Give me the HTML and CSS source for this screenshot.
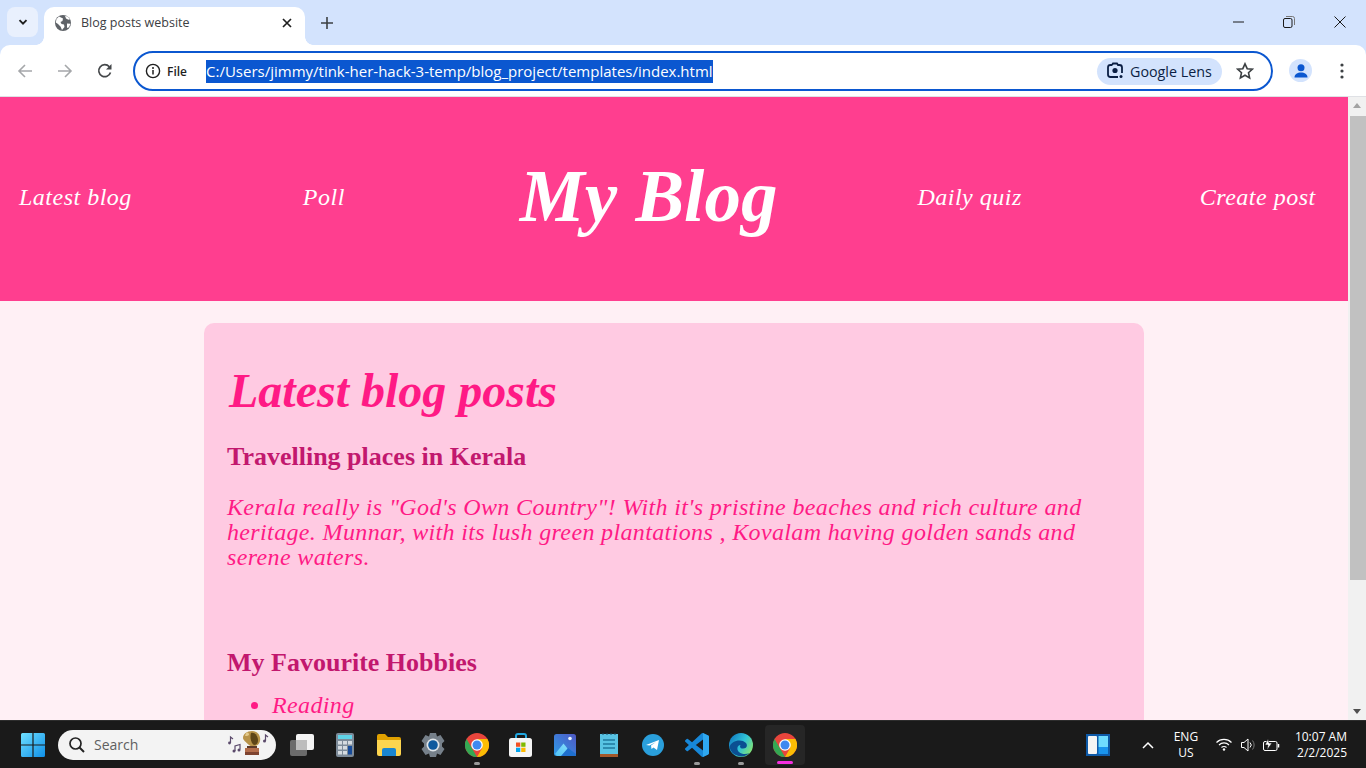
FILE: index.html
```html
<!DOCTYPE html>
<html lang="en">
<head>
<meta charset="utf-8">
<title>Blog posts website</title>
<link rel="stylesheet" href="styles.css">
</head>
<body>
<div class="window">
  <div class="tabstrip">
    <button class="tab-search"><svg width="12" height="12" viewBox="0 0 12 12"><path d="M2.5 4.2 6 7.7l3.5-3.5" fill="none" stroke="#1f1f1f" stroke-width="1.9"/></svg></button>
    <div class="tab">
      <svg class="tab-fav" width="16" height="16" viewBox="0 0 16 16"><circle cx="8" cy="8" r="8" fill="#5f6368"/><path d="M4 1.5 8 3.5 7.5 6 5.5 7 6.5 9 9 9.5 9.5 12 7 15 5.500 11.500 3 9 .8 7.500 1.500 4ZM10 .8l1 2.700 2.500 1.200 1.500-.5-2-2.500ZM12 8.500l3.500.2-1.500 3.500-2 .8Z" fill="#fff"/></svg>
      <span class="tab-title">Blog posts website</span>
      <svg class="tab-close" width="10" height="10" viewBox="0 0 10 10"><path d="M1 1l8 8M9 1 1 9" stroke="#1f1f1f" stroke-width="1.7"/></svg>
    </div>
    <svg class="new-tab" width="12" height="12" viewBox="0 0 12 12"><path d="M6 0v12M0 6h12" stroke="#3c4043" stroke-width="1.6"/></svg>
    <div class="win-controls">
      <svg width="11" height="11" viewBox="0 0 11 11"><path d="M0 5h11" stroke="#1a1a1a"/></svg>
      <svg width="12" height="12" viewBox="0 0 12 12"><rect x=".5" y="2.5" width="8.5" height="9" rx="1.5" fill="none" stroke="#1a1a1a"/><path d="M3 .5h6.500a2 2 0 0 1 2 2V9" fill="none" stroke="#777"/></svg>
      <svg width="12" height="12" viewBox="0 0 12 12"><path d="M.5.5l11 11M11.500.5l-11 11" stroke="#1a1a1a"/></svg>
    </div>
  </div>
  <div class="toolbar">
    <svg class="nav-ico" width="16" height="16" viewBox="0 0 16 16"><path d="M15 8H2M8 2 2 8l6 6" fill="none" stroke="#a5a7aa" stroke-width="1.6"/></svg>
    <svg class="nav-ico" width="16" height="16" viewBox="0 0 16 16"><path d="M1 8h13M8 2l6 6-6 6" fill="none" stroke="#a5a7aa" stroke-width="1.6"/></svg>
    <svg class="nav-ico" width="16" height="16" viewBox="0 0 16 16"><path d="M13.500 9.500A6 6 0 1 1 12.300 3.700" fill="none" stroke="#44474a" stroke-width="1.700"/><path d="M14.500 1v5.500H9z" fill="#44474a"/></svg>
    <div class="omnibox">
      <svg class="info" width="16" height="16" viewBox="0 0 16 16"><circle cx="8" cy="8" r="6.600" fill="none" stroke="#1f1f1f" stroke-width="1.400"/><path d="M8 7v4.500" stroke="#1f1f1f" stroke-width="1.500"/><circle cx="8" cy="4.900" r="1" fill="#1f1f1f"/></svg>
      <span class="file">File</span>
      <span class="url">C:/Users/jimmy/tink-her-hack-3-temp/blog_project/templates/index.html</span>
      <span class="lens">
        <svg width="18" height="18" viewBox="0 0 18 18"><path d="M6 3H4.500A2.500 2.500 0 0 0 2 5.500v7A2.500 2.500 0 0 0 4.500 15H12M6 3l1-1.500h4L12 3h1.500A2.500 2.500 0 0 1 16 5.500V11" fill="none" stroke="#0b1f44" stroke-width="1.800"/><circle cx="9" cy="8.500" r="2.600" fill="#0b1f44"/><circle cx="15" cy="14.500" r="1.500" fill="#0b1f44"/></svg>
        Google Lens
      </span>
      <svg class="star" width="18" height="18" viewBox="0 0 18 18"><path d="M9 1.800l2.200 4.900 5.200.5-3.900 3.500 1.100 5.200L9 13.200l-4.600 2.700 1.100-5.200-3.900-3.500 5.200-.5z" fill="none" stroke="#3c4043" stroke-width="1.600"/></svg>
    </div>
    <span class="avatar"><svg width="16" height="16" viewBox="0 0 16 16"><circle cx="8" cy="4.800" r="3.500" fill="#0b57d0"/><path d="M1.500 14.500c0-3.500 3-5 6.500-5s6.500 1.500 6.500 5z" fill="#0b57d0"/></svg></span>
    <svg class="menu" width="4" height="16" viewBox="0 0 4 16"><circle cx="2" cy="2" r="1.600" fill="#3c4043"/><circle cx="2" cy="8" r="1.600" fill="#3c4043"/><circle cx="2" cy="14" r="1.600" fill="#3c4043"/></svg>
  </div>
  <div class="viewport">
    <div class="page">
      <header class="hero">
        <nav class="nav-group">
          <a class="nav-link">Latest blog</a>
          <a class="nav-link">Poll</a>
        </nav>
        <h1 class="brand">My Blog</h1>
        <nav class="nav-group nav-group-right">
          <a class="nav-link">Daily quiz</a>
          <a class="nav-link">Create post</a>
        </nav>
      </header>
      <main class="card">
        <h2 class="card-title">Latest blog posts</h2>
        <article class="post">
          <h3 class="post-title">Travelling places in Kerala</h3>
          <p class="post-text">Kerala really is "God's Own Country"! With it's pristine beaches and rich culture and heritage. Munnar, with its lush green plantations , Kovalam having golden sands and serene waters.</p>
        </article>
        <article class="post">
          <h3 class="post-title">My Favourite Hobbies</h3>
          <ul class="post-list"><li>Reading</li></ul>
        </article>
      </main>
    </div>
    <div class="scrollbar">
      <span class="arrow-up"></span>
      <div class="track"><div class="thumb"></div></div>
      <span class="arrow-down"></span>
    </div>
  </div>
  <footer class="taskbar">
    <span class="slot"><svg width="24" height="24" viewBox="0 0 24 24"><defs><linearGradient id="w" x1="0" y1="0" x2="1" y2="1"><stop offset="0" stop-color="#6fe0ff"/><stop offset="1" stop-color="#0f8fe8"/></linearGradient></defs><path d="M0 1.500A1.500 1.500 0 0 1 1.500 0H11.400V11.400H0ZM12.600 0h9.900A1.500 1.500 0 0 1 24 1.500v9.900H12.600ZM0 12.600H11.400V24H1.500A1.500 1.500 0 0 1 0 22.500ZM12.600 12.600H24v9.900A1.500 1.500 0 0 1 22.500 24h-9.900Z" fill="url(#w)"/></svg></span>
    <div class="search">
      <svg width="18" height="18" viewBox="0 0 18 18"><circle cx="7.500" cy="7.500" r="5.500" fill="none" stroke="#222" stroke-width="1.700"/><path d="M11.500 11.500 16 16" stroke="#222" stroke-width="1.900"/></svg>
      <span class="search-text">Search</span>
      <svg class="gramophone" width="46" height="28" viewBox="0 0 46 28"><g fill="none" stroke="#5b4a6b" stroke-width="1.200"><path d="M3.500 12V6l2.500 2"/><path d="M8 20v-5l5-1.500v5"/><path d="M38.500 10V4l2.500 2"/></g><circle cx="2.500" cy="12" r="1.400" fill="#5b4a6b"/><circle cx="7" cy="20" r="1.500" fill="#5b4a6b"/><circle cx="12" cy="19" r="1.500" fill="#5b4a6b"/><circle cx="37.500" cy="10" r="1.500" fill="#5b4a6b"/><path d="M25 0C31 0 34 5 33 10c-.5 3-3 5-6 5l-2 1-3-2c-3-3-6-5-6-7C16 3 20 0 25 0Z" fill="#b8934a"/><path d="M24 2c4-1 7 3 7 7s-2 5-4 5c-2-1-3-4-3.500-7 0-2 0-4 .5-5Z" fill="#5e4518"/><path d="M19 2c2-1 3 0 3 2-1 1-3 1-4 1Z" fill="#e3c98a"/><path d="M20 15h10v3H20z" fill="#5c3a2a"/><path d="M18 17h14v4H18z" fill="#b36d4c"/><path d="M18 21h14v3H18z" fill="#7d4330"/></svg>
    </div>
    <span class="slot first"><svg width="24" height="22" viewBox="0 0 24 22"><rect y="6" width="17" height="16" rx="2" fill="#6b6b6b"/><rect x="6" y="0" width="18" height="16" rx="2" fill="#f4f4f4"/><rect x="6" y="6" width="11" height="10" fill="#bdbdbd"/></svg></span>
    <span class="slot"><svg width="18" height="24" viewBox="0 0 18 24"><rect width="18" height="24" rx="2" fill="#7d8b99"/><rect x="2" y="2" width="14" height="4" fill="#5fd3e8"/><g fill="#d5dbe0"><rect x="2" y="8" width="4" height="3.500"/><rect x="7" y="8" width="4" height="3.500"/><rect x="12" y="8" width="4" height="3.500"/><rect x="2" y="13" width="4" height="3.500"/><rect x="7" y="13" width="4" height="3.500"/><rect x="2" y="18" width="4" height="3.500"/><rect x="7" y="18" width="4" height="3.500"/></g><rect x="12" y="13" width="4" height="8.500" fill="#174b99"/></svg></span>
    <span class="slot"><svg width="24" height="22" viewBox="0 0 24 22"><path d="M0 2a2 2 0 0 1 2-2h6l3 3h11a2 2 0 0 1 2 2v3H0Z" fill="#e0a100"/><path d="M0 6h24v14a2 2 0 0 1-2 2H2a2 2 0 0 1-2-2Z" fill="#fdd54f"/><path d="M5 16a2 2 0 0 1 2-2h10a2 2 0 0 1 2 2v6H5Z" fill="#1a86d0"/></svg></span>
    <span class="slot"><svg width="24" height="24" viewBox="0 0 24 24"><path d="M9 0h6l1 3.500 3.500-1.500 4 6L21 10.500v3l2.500 2.500-4 6L16 20.500 15 24H9l-1-3.500L4.500 22l-4-6L3 13.500v-3L.5 8l4-6L8 3.500Z" fill="#76808a"/><circle cx="12" cy="12" r="6.500" fill="#dfe4e8"/><circle cx="12" cy="12" r="4.800" fill="#0f5a9e"/></svg></span>
    <span class="slot dotted"><svg width="24" height="24" viewBox="0 0 24 24"><circle cx="12" cy="12" r="12" fill="#e8453c"/><path d="M1.600 6 6.800 15 12 24A12 12 0 0 1 1.600 6Z" fill="#34a853"/><path d="M12 6H22.400A12 12 0 0 1 12 24L17.200 15Z" fill="#fbbc04"/><circle cx="12" cy="12" r="5.800" fill="#fff"/><circle cx="12" cy="12" r="4.500" fill="#3f89f0"/></svg></span>
    <span class="slot"><svg width="24" height="24" viewBox="0 0 24 24"><path d="M7 6V3a2 2 0 0 1 2-2h6a2 2 0 0 1 2 2v3" fill="none" stroke="#22a7e0" stroke-width="2"/><rect y="5" width="23" height="19" rx="2.500" fill="#f5f5f5"/><rect x="7" y="9.500" width="4.300" height="4.300" fill="#f25022"/><rect x="12.200" y="9.500" width="4.300" height="4.300" fill="#7fba00"/><rect x="7" y="14.700" width="4.300" height="4.300" fill="#00a4ef"/><rect x="12.200" y="14.700" width="4.300" height="4.300" fill="#ffb900"/></svg></span>
    <span class="slot"><svg width="22" height="22" viewBox="0 0 22 22"><defs><linearGradient id="p" x1="0" y1="1" x2="1" y2="0"><stop offset="0" stop-color="#2e9be8"/><stop offset="1" stop-color="#4f58c4"/></linearGradient><linearGradient id="m" x1="0" y1="1" x2="1" y2="0"><stop offset="0" stop-color="#4fc3f7"/><stop offset="1" stop-color="#8fe3fb"/></linearGradient></defs><rect width="22" height="22" rx="2.500" fill="url(#p)"/><circle cx="16" cy="4.500" r="1.800" fill="#e8f4ff"/><path d="M1 20 9.500 9.500 19 21.500 7 22H3Z" fill="url(#m)"/><path d="M7 22 14 14l8 6v2Z" fill="#1e6fce"/></svg></span>
    <span class="slot"><svg width="18" height="24" viewBox="0 0 18 24"><rect y="1" width="18" height="21" fill="#58c3e3"/><rect y="21" width="18" height="3" fill="#a3582a"/><g stroke="#1f7a9e" stroke-width="1.500"><path d="M3 7h12M3 11h12M3 15h12"/></g><g stroke="#184f68" stroke-width="1"><path d="M3 0v2M7 0v2M11 0v2M15 0v2"/></g></svg></span>
    <span class="slot"><svg width="22" height="22" viewBox="0 0 22 22"><circle cx="11" cy="11" r="11" fill="#2a9fdb"/><path d="M4 11l13-5-2 10-3.500-2.500L9.500 15l-.5-3.500L14 8l-6.500 3.500Z" fill="#fff"/></svg></span>
    <span class="slot dotted"><svg width="24" height="24" viewBox="0 0 24 24"><path d="M23.150 2.587 18.210.21a1.494 1.494 0 0 0-1.705.29l-9.460 8.630-4.120-3.128a.999.999 0 0 0-1.276.057L.327 7.261A1 1 0 0 0 .326 8.740L3.899 12 .326 15.260a1 1 0 0 0 .001 1.479L1.650 17.940a.999.999 0 0 0 1.276.057l4.120-3.128 9.460 8.630a1.492 1.492 0 0 0 1.704.29l4.942-2.377A1.500 1.500 0 0 0 24 20.060V3.939a1.500 1.500 0 0 0-.85-1.352zm-5.146 14.861L10.826 12l7.178-5.448v10.896z" fill="#1787d8"/><path d="M18 0 23.150 2.587A1.500 1.500 0 0 1 24 3.939V20.060A1.500 1.500 0 0 1 23.150 21.413L18 24Z" fill="#2fa8f0"/></svg></span>
    <span class="slot dotted"><svg width="24" height="24" viewBox="0 0 24 24"><defs><linearGradient id="e" x1="0" y1="0" x2="1" y2=".6"><stop offset="0" stop-color="#0d6ebd"/><stop offset=".6" stop-color="#2fc3d8"/><stop offset="1" stop-color="#7ee27b"/></linearGradient></defs><circle cx="12" cy="12" r="12" fill="url(#e)"/><path d="M.5 14C2 8 12 5 17 10c2 3 .5 5.500-3 5.500-3 0-3.500-2-2.500-3.500-3 0-4.500 4-1.500 7 3 2.500 7 2.500 10.500 1A12 12 0 0 1 .5 14Z" fill="#0b4f92"/></svg></span>
    <span class="slot active"><svg width="24" height="24" viewBox="0 0 24 24"><circle cx="12" cy="12" r="12" fill="#e8453c"/><path d="M1.600 6 6.800 15 12 24A12 12 0 0 1 1.600 6Z" fill="#34a853"/><path d="M12 6H22.400A12 12 0 0 1 12 24L17.200 15Z" fill="#fbbc04"/><circle cx="12" cy="12" r="5.800" fill="#fff"/><circle cx="12" cy="12" r="4.500" fill="#3f89f0"/></svg></span>
    <div class="tray">
      <svg class="widget" width="24" height="22" viewBox="0 0 24 22"><rect width="24" height="22" fill="#0e5aa8"/><rect x="2" y="2" width="9" height="18" rx="1" fill="#f4f4f4"/><rect x="12.500" y="2" width="9.500" height="11" fill="#6fdcff"/><rect x="12.500" y="13" width="9.500" height="7" fill="#1a95ee"/></svg>
      <svg class="chev" width="12" height="8" viewBox="0 0 12 8"><path d="M1 7l5-5 5 5" fill="none" stroke="#fff" stroke-width="1.500"/></svg>
      <span class="lang">ENG<br>US</span>
      <svg class="wifi" width="16" height="13" viewBox="0 0 16 13"><g fill="none" stroke="#fff" stroke-width="1.100"><path d="M.5 4.500a10.500 10.500 0 0 1 15 0"/><path d="M3 7a7 7 0 0 1 10 0"/><path d="M5.500 9.500a3.500 3.500 0 0 1 5 0"/></g><circle cx="8" cy="11.500" r="1.200" fill="#fff"/></svg>
      <svg class="vol" width="16" height="14" viewBox="0 0 16 14"><path d="M.5 4.500h2.500L7 1v12L3 9.500H.5Z" fill="none" stroke="#fff"/><path d="M9 4.500a3.500 3.500 0 0 1 0 5" fill="none" stroke="#fff"/><path d="M11.500 2.500a7 7 0 0 1 0 9" fill="none" stroke="#777"/></svg>
      <svg class="batt" width="17" height="14" viewBox="0 0 17 14"><rect x=".5" y="3.500" width="13.500" height="9" rx="1.500" fill="none" stroke="#fff"/><path d="M15.500 6v3.500" stroke="#fff" stroke-width="1.500"/><path d="M5 1 2 7h3l-1 5 5-7H6Z" fill="#fff" stroke="#1a1a1a" stroke-width=".6"/></svg>
      <span class="clock">10:07 AM<br>2/2/2025</span>
    </div>
  </footer>
</div>
</body>
</html>
```
FILE: styles.css
```css
* { box-sizing: border-box; }
html, body { margin: 0; height: 100%; overflow: hidden; }
body { font-family: "Open Sans", "Noto Sans", sans-serif; }
.window { display: flex; flex-direction: column; height: 768px; width: 1366px; background: #d3e3fd; }

/* tab strip */
.tabstrip { height: 45px; background: #d3e3fd; display: flex; align-items: flex-end; flex: none; }
.tab-search { width: 31px; height: 30px; margin: 0 6px 8px 7px; border: 0; border-radius: 8px; background: #e9f0fd; display: flex; align-items: center; justify-content: center; padding: 0; }
.tab { width: 261px; height: 38px; background: #fff; border-radius: 10px 10px 0 0; display: flex; align-items: center; padding: 0 13px 7px 11px; font-size: 12.5px; color: #3c4043; position: relative; }
.tab::before, .tab::after { content: ""; position: absolute; bottom: 0; width: 8px; height: 8px; background: radial-gradient(circle at 100% 0, #d3e3fd 7.5px, #fff 8px); }
.tab::before { left: -8px; transform: scaleX(-1); }
.tab::after { right: -8px; }
.tab-fav { flex: none; }
.tab-title { margin-left: 10px; flex: 1; }
.new-tab { margin: 0 0 16px 16px; }
.win-controls { margin-left: auto; display: flex; gap: 39px; padding-right: 20px; margin-bottom: 17px; align-items: center; }

/* toolbar */
.toolbar { height: 52px; display: flex; align-items: center; flex: none; padding-left: 17px; border-bottom: 1px solid #dfe1e5; border-radius: 10px 10px 0 0; background: #fff; }
.nav-ico { margin-right: 24px; flex: none; }
.nav-ico:nth-child(3) { margin-right: 20px; }
.omnibox { width: 1140px; height: 40px; border: 2px solid #0b57d0; border-radius: 20px; display: flex; align-items: center; padding: 0 17px 0 10px; margin-top: 1px; flex: none; }
.info { flex: none; }
.file { font-size: 12px; font-weight: 600; color: #1f1f1f; margin-left: 6px; width: 39px; flex: none; }
.url { background: #0b57d0; color: #fff; font-size: 15px; line-height: 20px; height: 23px; padding-top: 1px; white-space: nowrap; }
.lens { margin-left: auto; height: 27px; width: 125px; border-radius: 14px; background: #d3e3fd; display: flex; align-items: center; gap: 6px; padding-left: 9px; font-size: 14.3px; color: #0b1f44; }
.star { margin-left: 14px; flex: none; }
.avatar { margin-left: 16px; width: 23px; height: 23px; border-radius: 50%; background: #d3e3fd; display: flex; align-items: center; justify-content: center; flex: none; }
.menu { margin-left: 28px; flex: none; }

/* page */
.viewport { flex: 1; min-height: 0; display: flex; overflow: hidden; background: #fff0f5; }
.page { flex: 1; min-width: 0; overflow: hidden; }
.hero { height: 204px; background: #ff3e8f; display: flex; align-items: center; padding: 0 0 4px 19px; color: #fff; }
.nav-group { display: flex; gap: 171px; }
.nav-group-right { gap: 178px; }
.brand { margin: 0 140px 0 175px; }
.nav-link, .brand, .card-title, .post-text, .post-list { font-family: "Liberation Serif", serif; font-style: italic; }
.nav-link { font-size: 24px; letter-spacing: .5px; }
.brand { font-size: 73px; font-weight: 700; white-space: nowrap; }
.card { width: 940px; margin: 22px auto 0; background: #ffcae2; border-radius: 10px; padding: 46px 23px 60px; }
.card-title { margin: 0 0 0 2px; font-size: 48px; font-weight: 700; color: #ff1a85; line-height: 44px; white-space: nowrap; }
.post { margin-bottom: 78px; }
.post-title { margin: 29px 0 0; font-family: "Liberation Serif", serif; font-size: 26px; font-weight: 700; color: #c2186e; line-height: 30px; }
.post-text { margin: 23px 0 0; font-size: 24px; line-height: 25px; letter-spacing: .36px; color: #ff1a85; }
.post-list { margin: 15px 0 0; padding-left: 45px; font-size: 24px; line-height: 25px; letter-spacing: .36px; color: #ff1a85; }

/* scrollbar */
.scrollbar { width: 18px; flex: none; background: #f1f1f1; display: flex; flex-direction: column; align-items: flex-end; }
.arrow-up, .arrow-down { flex: none; height: 17px; width: 17px; position: relative; }
.arrow-up::after, .arrow-down::after { content: ""; position: absolute; left: 4px; border-left: 4.5px solid transparent; border-right: 4.5px solid transparent; }
.arrow-up::after { top: 6px; border-bottom: 5px solid #a3a3a3; }
.arrow-down::after { top: 6px; border-top: 5px solid #505050; }
.track { flex: 1; width: 16px; }
.thumb { height: 464px; margin-top: 2px; background: #c1c1c1; }

/* taskbar */
.taskbar { height: 48px; flex: none; background: #1a1a1a; border-top: 1px solid #2d2d2d; display: flex; align-items: center; padding-left: 11px; color: #fff; }
.slot { width: 44px; height: 40px; display: flex; align-items: center; justify-content: center; position: relative; flex: none; }
.slot.first { margin-left: 4px; margin-right: -1px; }
.dotted::after { content: ""; position: absolute; bottom: 0; left: 19px; width: 6px; height: 3px; border-radius: 2px; background: #9a9a9a; }
.active { background: #262626; border-radius: 4px; width: 40px; margin-left: 2px; }
.active::after { content: ""; position: absolute; bottom: 1px; left: 12px; width: 16px; height: 3px; border-radius: 2px; background: #f52ee0; }
.search { width: 218px; height: 30px; border-radius: 15px; background: #f3f3f3; margin-left: 3px; display: flex; align-items: center; padding-left: 10px; flex: none; position: relative; }
.search-text { margin-left: 8px; font-size: 14px; color: #5f5f5f; }
.gramophone { position: absolute; right: 3px; top: 1px; }
.tray { margin-left: auto; display: flex; align-items: center; height: 100%; padding-right: 19px; }
.widget { margin-right: 32px; }
.chev { margin-right: 14px; }
.lang { font-size: 12px; line-height: 16px; text-align: center; width: 36px; margin-right: 12px; }
.wifi { margin-right: 9px; }
.vol { margin-right: 6px; }
.batt { margin-right: 15px; }
.clock { font-size: 12px; line-height: 16px; text-align: right; }
```
